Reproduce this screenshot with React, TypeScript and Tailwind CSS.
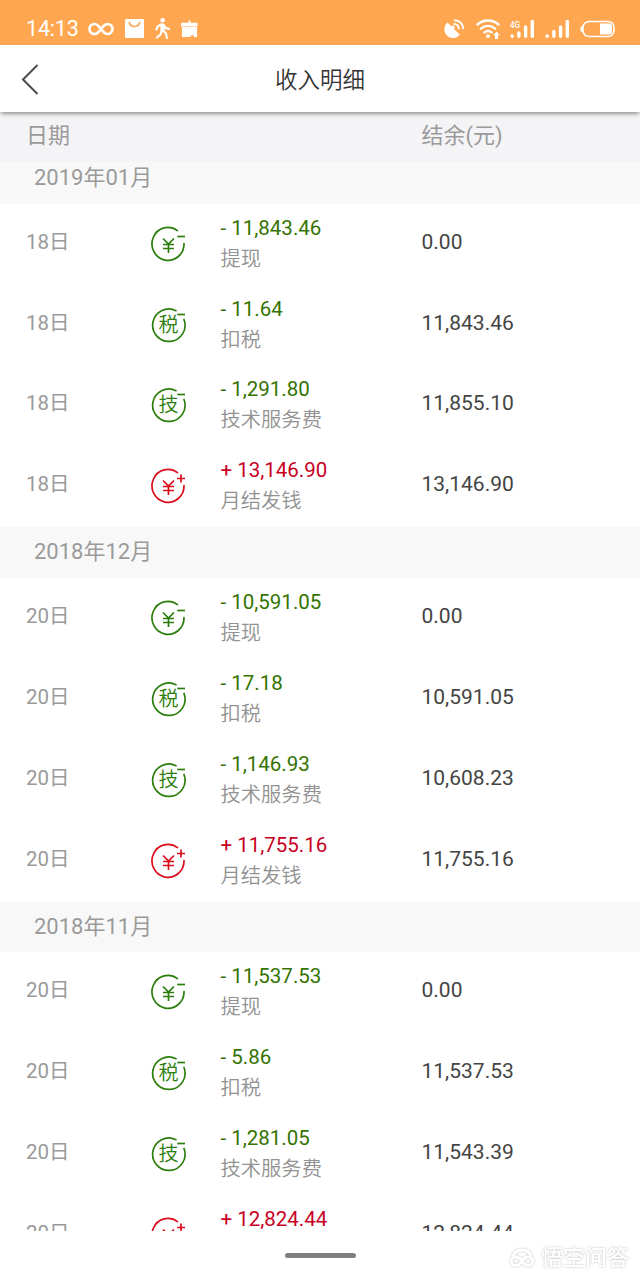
type Kind = 'cash' | 'tax' | 'tech' | 'income';

interface Entry {
    kind: Kind;
    amount: string;
    balance: string;
}

interface Month {
    title: string;
    day: string;
    entries: Entry[];
}

const LABELS: Record<Kind, string> = {
    cash: '提现',
    tax: '扣税',
    tech: '技术服务费',
    income: '月结发钱',
};

const MONTHS: Month[] = [
    {
        title: '2019年01月',
        day: '18日',
        entries: [
            { kind: 'cash', amount: '- 11,843.46', balance: '0.00' },
            { kind: 'tax', amount: '- 11.64', balance: '11,843.46' },
            { kind: 'tech', amount: '- 1,291.80', balance: '11,855.10' },
            { kind: 'income', amount: '+ 13,146.90', balance: '13,146.90' },
        ],
    },
    {
        title: '2018年12月',
        day: '20日',
        entries: [
            { kind: 'cash', amount: '- 10,591.05', balance: '0.00' },
            { kind: 'tax', amount: '- 17.18', balance: '10,591.05' },
            { kind: 'tech', amount: '- 1,146.93', balance: '10,608.23' },
            { kind: 'income', amount: '+ 11,755.16', balance: '11,755.16' },
        ],
    },
    {
        title: '2018年11月',
        day: '20日',
        entries: [
            { kind: 'cash', amount: '- 11,537.53', balance: '0.00' },
            { kind: 'tax', amount: '- 5.86', balance: '11,537.53' },
            { kind: 'tech', amount: '- 1,281.05', balance: '11,543.39' },
            { kind: 'income', amount: '+ 12,824.44', balance: '12,824.44' },
        ],
    },
];

function SignalBars({ label }: { label?: string }) {
    return (
        <svg width="25" height="20" viewBox="0 0 25 20" fill="none" stroke="#fff" strokeWidth="3.4" strokeLinecap="round">
            <path d={label ? 'M2.2 17v.3M8.900 14v3.300M15.600 8v9.300M22.300 2.500v14.800' : 'M2.2 17v.3M8.900 12.500v4.800M15.600 8v9.300M22.300 2.500v14.800'} />
            {label && (
                <text x="0" y="8.500" fill="#fff" stroke="none" fontSize="9" fontWeight="500" textLength="10" lengthAdjust="spacingAndGlyphs">{label}</text>
            )}
        </svg>
    );
}

function StatusBar() {
    return (
        <div className="h-[45px] shrink-0 bg-[#ffa650] pl-[26px] pr-[25px] pt-[12px] flex items-center text-white">
            <span className="w-[62px] text-[21.5px] leading-none tracking-[-0.2px]">14:13</span>
            <svg width="26" height="14" viewBox="0 0 26 14" fill="none" stroke="#fff" strokeWidth="2.700" strokeLinecap="round">
                <path d="M14.500 5C16.300 3 17.500 2 19.500 2a5 5 0 0 1 0 10C14 12 12 2 6.500 2a5 5 0 0 0 0 10c2 0 3.200-1 5-3" />
            </svg>
            <svg className="ml-[11px]" width="19" height="19" viewBox="0 0 19 19">
                <rect width="19" height="19" rx="1" fill="#fff" />
                <path d="M4.300 3.500c1.300 5.300 9 5.300 10.400 0" fill="none" stroke="#ffa650" strokeWidth="1.6" strokeLinecap="round" />
            </svg>
            <svg className="ml-[11px]" width="15" height="21" viewBox="0 0 15 21" fill="none" stroke="#fff" strokeLinecap="round" strokeLinejoin="round">
                <circle cx="7.600" cy="2.300" r="2.300" fill="#fff" stroke="none" />
                <path d="M7.500 7.500v4.500" strokeWidth="4.200" />
                <path d="M6.500 6.300L2.500 8.500l-1 3M8.500 7l2.500 3.200 3 .600M7 12.500l-1.500 4-3.500 3M8.500 12.500l2.500 3 .800 4.300" strokeWidth="2.200" />
            </svg>
            <svg className="ml-[11px]" width="17" height="18" viewBox="0 0 18 18" fill="#fff">
                <path d="M8 0h2v2.500h6.500a1 1 0 0 1 1 1V6.300H0V3.500a1 1 0 0 1 1-1h7zM1 7h16v10.500h-2.700L12 15l-2.500 2.500H1z" />
            </svg>

            <div className="ml-auto flex items-center">
                <svg width="21" height="20" viewBox="0 0 21 20">
                    <path d="M3.500 3.600L7.700 7.500l1.600-1.300 1.800 2-1.300 1.500 6 6C12 20 6.500 20 3 16.500S-.500 7.500 3.500 3.600z" fill="#fff" />
                    <path d="M10.300 5c2.300.100 4.300 2 4.500 4.300M10.800 1.200c4.600 0 8 3.600 8.200 8" fill="none" stroke="#fff" strokeWidth="2" strokeLinecap="round" />
                </svg>
                <svg className="ml-[11px]" width="25" height="20" viewBox="0 0 25 20" fill="none" stroke="#fff" strokeWidth="2.400" strokeLinecap="round">
                    <path d="M1.500 5.500c6-5.300 15-5.300 21 0M5 9.600c4-3.600 10-3.600 14 0M8.500 13.400c2.200-1.900 4.800-1.900 7 0" />
                    <circle cx="12" cy="17.200" r="1.900" fill="#fff" stroke="none" />
                    <path d="M20.500 12.500l3.500 3.700h-2V20h-3v-3.800h-2z" fill="#fff" stroke="none" />
                </svg>
                <div className="ml-[9px]"><SignalBars label="4G" /></div>
                <div className="ml-[10px]"><SignalBars /></div>
                <svg className="ml-[10px]" width="35" height="18" viewBox="0 0 35 18">
                    <path d="M3 5.500v7L.500 11V7z" fill="#fff" />
                    <rect x="3" y="1.500" width="31" height="15" rx="6" fill="none" stroke="#fff" strokeWidth="1.600" />
                    <path d="M21 3.500h8a3 3 0 0 1 3 3v5a3 3 0 0 1-3 3h-8a1 1 0 0 1-1-1v-9a1 1 0 0 1 1-1z" fill="#fff" />
                </svg>
            </div>
        </div>
    );
}

function KindIcon({ kind }: { kind: Kind }) {
    const positive = kind === 'income';
    const glyph = kind === 'tax' ? '税' : kind === 'tech' ? '技' : null;
    return (
        <svg
            className={positive ? 'text-[#d90d1c]' : 'text-[#2b7d0c]'}
            width="36"
            height="36"
            viewBox="0 0 36 36"
            fill="none"
            stroke="currentColor"
            strokeWidth="1.700"
        >
            <path d={glyph ? 'M25 3.700A16.200 16.200 0 1 0 33 12.500' : 'M26.500 4.600A16 16.500 0 1 0 33 17.500'} strokeLinecap="round" />
            {positive ? <path d="M26 10.500h8M30 6.500v8" /> : <path d={glyph ? 'M26.300 7.500H34' : 'M26.300 10.500H34'} />}
            {glyph ? (
                <text x="17.500" y="24.700" textAnchor="middle" fontSize="20" fontWeight="350" fill="currentColor" stroke="none">{glyph}</text>
            ) : (
                <path d="M12 12.500l5.500 5.500 5.500-5.500M12 18.500h11M12 22.500h11M17.500 18v9" />
            )}
        </svg>
    );
}

function EntryRow({ day, entry }: { day: string; entry: Entry }) {
    return (
        <div className="h-[80.95px] flex pl-[26px]">
            <div className="w-[125px] pt-[22px] text-[20.5px] leading-8 text-[#9a9a9a]">{day}</div>
            <div className="w-[69.5px] pt-[22px]">
                <KindIcon kind={entry.kind} />
            </div>
            <div className="w-[201px] pt-[9px] text-[20.5px] leading-[30px]">
                <p className={entry.kind === 'income' ? 'text-[#c8001f]' : 'text-[#347300]'}>{entry.amount}</p>
                <p className="pt-px text-[20.3px] font-[350] text-[#929292]">{LABELS[entry.kind]}</p>
            </div>
            <div className="pt-[22px] text-[21px] leading-8 text-[#444]">{entry.balance}</div>
        </div>
    );
}

export default function App() {
    return (
        <div className="relative w-[640px] h-[1280px] overflow-hidden bg-white flex flex-col font-[Roboto,'Noto_Sans_CJK_SC',sans-serif]">
            <StatusBar />
            <header className="relative z-10 h-[67px] shrink-0 bg-white shadow-[0_3px_4px_-1px_rgba(0,0,0,0.4)] grid grid-cols-[64px_1fr_64px] items-center">
                <svg className="ml-[21px]" width="18" height="32" viewBox="0 0 18 32" fill="none" stroke="#4a4a4a" strokeWidth="2">
                    <path d="M16.500 2L2 16.500 16.500 31" />
                </svg>
                <h1 className="text-center text-[22.5px] font-[350] text-[#333] pt-[4px]">收入明细</h1>
            </header>
            <div className="h-[50px] shrink-0 bg-[#f4f4f6] flex items-center pl-[26px] pb-[3px] text-[22px] text-[#9a9a9a]">
                <span className="w-[395.5px]">日期</span>
                <span>结余(元)</span>
            </div>
            <main className="h-[1069px] shrink-0 overflow-hidden">
                <div className="-mt-[9px]">
                    {MONTHS.map(month => (
                        <section key={month.title}>
                            <h2 className="h-[50.6px] bg-[#f8f8f8] pl-[34px] text-[22px] leading-[50px] text-[#9a9a9a]">
                                {month.title}
                            </h2>
                            {month.entries.map(entry => (
                                <EntryRow key={entry.kind} day={month.day} entry={entry} />
                            ))}
                        </section>
                    ))}
                </div>
            </main>
            <footer className="flex-1 bg-white flex justify-center pt-[22px]">
                <div className="w-[71px] h-[5px] rounded-full bg-[#808080]" />
            </footer>
            {/* faint watermark over the navigation area */}
            <div className="absolute right-[11px] bottom-[8px] flex items-center gap-[6px] text-white text-[22px] leading-7 font-medium [filter:drop-shadow(0_0_1px_rgba(0,0,0,0.25))]">
                <svg width="26" height="20" viewBox="0 0 26 20" fill="none" stroke="#fff" strokeWidth="3">
                    <path d="M4 9C5 4 9 2 13 2s8 2 9 7" />
                    <path d="M13 13c-2-3-4-4-6.500-4a4.200 4.200 0 0 0 0 8.500c2.500 0 4.500-1.500 6.500-4.500s4-4 6.500-4a4.200 4.200 0 0 1 0 8.500c-2.500 0-4.500-1.500-6.500-4.500z" />
                </svg>
                <span>悟空问答</span>
            </div>
        </div>
    );
}
